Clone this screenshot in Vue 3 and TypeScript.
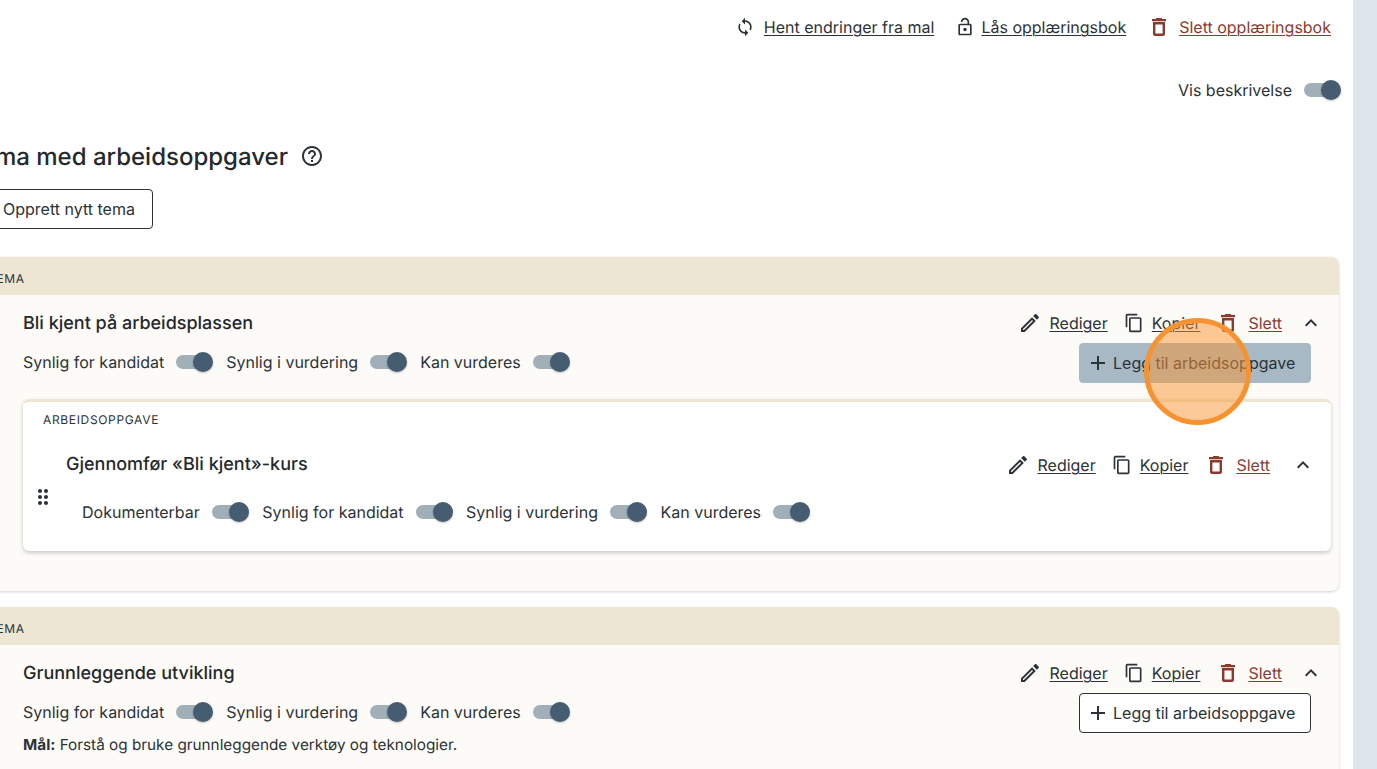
<template>
  <div class="page">
    <main class="main">
      <div class="content">
        <div class="top-actions">
          <a class="action sync">
            <svg class="icon small" viewBox="0 0 24 24"><path :d="icons.sync" /></svg>
            <span>Hent endringer fra mal</span>
          </a>
          <a class="action lock">
            <svg class="icon small" viewBox="0 0 24 24"><path :d="icons.lock" /></svg>
            <span>Lås opplæringsbok</span>
          </a>
          <a class="action danger">
            <svg class="icon" viewBox="0 0 24 24"><path :d="icons.trash" /></svg>
            <span>Slett opplæringsbok</span>
          </a>
        </div>

        <div class="show-desc">
          <span>Vis beskrivelse</span>
          <span class="switch"><span class="knob"></span></span>
        </div>

        <h2 class="heading">
          Tema med arbeidsoppgaver
          <svg class="help" viewBox="0 0 24 24"><path :d="icons.help" /></svg>
        </h2>
        <button class="btn new-theme">Opprett nytt tema</button>

        <section v-for="theme in themes" :key="theme.title" class="theme">
          <div class="theme-tag">TEMA</div>
          <div class="theme-body">
            <div class="theme-head">
              <div class="theme-info">
                <h3 class="title">{{ theme.title }}</h3>
                <div class="toggles">
                  <label v-for="t in themeToggles" :key="t" class="toggle">
                    <span>{{ t }}</span>
                    <span class="switch"><span class="knob"></span></span>
                  </label>
                </div>
                <p v-if="theme.goal" class="goal"><b>Mål:</b> {{ theme.goal }}</p>
              </div>
              <div class="theme-side">
                <div class="row-actions">
                  <a class="action edit">
                    <svg class="icon" viewBox="0 0 24 24"><path :d="icons.edit" /></svg>
                    <span>Rediger</span>
                  </a>
                  <a class="action">
                    <svg class="icon copy" viewBox="0 0 24 24"><path :d="icons.copy" /></svg>
                    <span>Kopier</span>
                  </a>
                  <a class="action danger">
                    <svg class="icon" viewBox="0 0 24 24"><path :d="icons.trash" /></svg>
                    <span>Slett</span>
                  </a>
                  <svg class="icon chevron" viewBox="0 0 24 24"><path :d="icons.less" /></svg>
                </div>
                <button class="btn add" :class="{ hovered: theme.hovered }">
                  <svg class="icon plus" viewBox="0 0 24 24"><path :d="icons.plus" /></svg>
                  Legg til arbeidsoppgave
                </button>
              </div>
            </div>

            <article v-if="theme.task" class="task">
              <div class="task-tag">ARBEIDSOPPGAVE</div>
              <div class="task-row">
                <svg class="drag" viewBox="0 0 24 24"><path :d="icons.drag" /></svg>
                <div class="task-main">
                  <div class="task-head">
                    <h3 class="title">{{ theme.task }}</h3>
                    <div class="row-actions">
                      <a class="action edit">
                        <svg class="icon" viewBox="0 0 24 24"><path :d="icons.edit" /></svg>
                        <span>Rediger</span>
                      </a>
                      <a class="action">
                        <svg class="icon copy" viewBox="0 0 24 24"><path :d="icons.copy" /></svg>
                        <span>Kopier</span>
                      </a>
                      <a class="action danger">
                        <svg class="icon" viewBox="0 0 24 24"><path :d="icons.trash" /></svg>
                        <span>Slett</span>
                      </a>
                      <svg class="icon chevron task-chevron" viewBox="0 0 24 24"><path :d="icons.less" /></svg>
                    </div>
                  </div>
                  <div class="toggles task-toggles">
                    <label v-for="t in taskToggles" :key="t" class="toggle">
                      <span>{{ t }}</span>
                      <span class="switch"><span class="knob"></span></span>
                    </label>
                  </div>
                </div>
              </div>
            </article>
          </div>
        </section>
      </div>
    </main>
    <aside class="rail"></aside>
    <div class="cursor-ring"></div>
  </div>
</template>

<script setup lang="ts">
interface Theme {
  title: string
  goal?: string
  task?: string
  hovered?: boolean
}

const themeToggles = ['Synlig for kandidat', 'Synlig i vurdering', 'Kan vurderes']
const taskToggles = ['Dokumenterbar', ...themeToggles]

const themes: Theme[] = [
  { title: 'Bli kjent på arbeidsplassen', task: 'Gjennomfør «Bli kjent»-kurs', hovered: true },
  { title: 'Grunnleggende utvikling', goal: 'Forstå og bruke grunnleggende verktøy og teknologier.' },
]

const icons = {
  sync: 'M12 4V1L8 5l4 4V6c3.31 0 6 2.69 6 6 0 1.01-.25 1.97-.7 2.8l1.46 1.46C19.54 15.03 20 13.57 20 12c0-4.42-3.58-8-8-8zm0 14c-3.31 0-6-2.69-6-6 0-1.01.25-1.97.7-2.8L5.24 7.74C4.46 8.97 4 10.43 4 12c0 4.42 3.58 8 8 8v3l4-4-4-4v3z',
  lock: 'M18 8h-1V6c0-2.76-2.24-5-5-5S7 3.24 7 6h2c0-1.66 1.34-3 3-3s3 1.34 3 3v2H6c-1.1 0-2 .9-2 2v10c0 1.1.9 2 2 2h12c1.1 0 2-.9 2-2V10c0-1.1-.9-2-2-2zm0 12H6V10h12v10zm-6-3c1.1 0 2-.9 2-2s-.9-2-2-2-2 .9-2 2 .9 2 2 2z',
  trash: 'M6 19c0 1.1.9 2 2 2h8c1.1 0 2-.9 2-2V7H6v12zM8.4 9.4h7.2v9.2H8.4V9.4zM15.5 4l-1-1h-5l-1 1H5v2.2h14V4h-3.5z',
  edit: 'M3 17.25V21h3.75L17.81 9.94l-3.75-3.75L3 17.25zM5.92 19H5v-.92l9.06-9.06.92.92L5.92 19zM20.71 7.04c.39-.39.39-1.02 0-1.41l-2.34-2.34c-.39-.39-1.02-.39-1.41 0l-1.83 1.83 3.75 3.75 1.83-1.83z',
  copy: 'M16 1H4c-1.1 0-2 .9-2 2v14h2V3h12V1zm3 4H8c-1.1 0-2 .9-2 2v14c0 1.1.9 2 2 2h11c1.1 0 2-.9 2-2V7c0-1.1-.9-2-2-2zm0 16H8V7h11v14z',
  less: 'M12 8l-6 6 1.41 1.41L12 10.83l4.59 4.58L18 14z',
  plus: 'M19 13h-6v6h-2v-6H5v-2h6V5h2v6h6v2z',
  help: 'M11 18h2v-2h-2v2zm1-16C6.48 2 2 6.48 2 12s4.48 10 10 10 10-4.48 10-10S17.52 2 12 2zm0 18c-4.41 0-8-3.59-8-8s3.59-8 8-8 8 3.59 8 8-3.59 8-8 8zm0-14c-2.21 0-4 1.79-4 4h2c0-1.1.9-2 2-2s2 .9 2 2c0 2-3 1.75-3 5h2c0-2.25 3-2.5 3-5 0-2.21-1.79-4-4-4z',
  drag: 'M11 18c0 1.1-.9 2-2 2s-2-.9-2-2 .9-2 2-2 2 .9 2 2zm-2-8c-1.1 0-2 .9-2 2s.9 2 2 2 2-.9 2-2-.9-2-2-2zm0-6c-1.1 0-2 .9-2 2s.9 2 2 2 2-.9 2-2-.9-2-2-2zm6 4c1.1 0 2-.9 2-2s-.9-2-2-2-2 .9-2 2 .9 2 2 2zm0 2c-1.1 0-2 .9-2 2s.9 2 2 2 2-.9 2-2-.9-2-2-2zm0 6c-1.1 0-2 .9-2 2s.9 2 2 2 2-.9 2-2-.9-2-2-2z',
}
</script>

<style>
html,
body {
  margin: 0;
  overflow: hidden;
  background: #fff;
}
</style>

<style scoped>
.page {
  position: relative;
  display: flex;
  height: 769px;
  overflow: hidden;
  font-family: Inter, "Liberation Sans", sans-serif;
  font-size: 16px;
  color: #2b3238;
  text-rendering: geometricPrecision;
}

.main {
  flex: 1;
  min-width: 0;
  overflow: hidden;
}

.rail {
  width: 24px;
  background: #dde6ed;
}

.content {
  margin-left: -14px;
  width: 1353px;
  padding-top: 15px;
}

.top-actions {
  display: flex;
  justify-content: flex-end;
  gap: 21px;
  padding-right: 8px;
}

.action {
  display: inline-flex;
  align-items: center;
  gap: 8px;
  color: #2b3238;
}

.action.sync {
  gap: 9px;
}

.action.lock {
  gap: 6px;
}

.action.edit {
  gap: 7px;
}

.action span {
  text-decoration: underline;
  text-underline-offset: 2px;
  text-decoration-thickness: 1px;
}

.action.danger {
  color: #8b3a2e;
}

.icon {
  width: 24px;
  height: 24px;
  fill: currentColor;
  flex: none;
}

.icon.small,
.icon.copy {
  width: 20px;
  height: 20px;
}

.show-desc {
  display: flex;
  justify-content: flex-end;
  align-items: center;
  gap: 12px;
  margin: 39px -2px 0 0;
  height: 24px;
}

.switch {
  position: relative;
  display: inline-block;
  width: 37px;
  height: 20px;
  flex: none;
}

.switch::before {
  content: "";
  position: absolute;
  left: 0;
  top: 3px;
  width: 34px;
  height: 14px;
  border-radius: 7px;
  background: #a1afb9;
}

.knob {
  position: absolute;
  right: 0;
  top: 0;
  width: 20px;
  height: 20px;
  border-radius: 50%;
  background: #465c70;
  box-shadow: 0 1px 2px rgba(0, 0, 0, 0.25);
}

.heading {
  display: flex;
  align-items: center;
  gap: 12px;
  margin: 37px 0 0 -19px;
  height: 34px;
  font-size: 24px;
  font-weight: 500;
  color: #25292d;
}

.help {
  width: 24px;
  height: 24px;
  fill: #2b3238;
}

.btn {
  display: inline-flex;
  align-items: center;
  height: 40px;
  box-sizing: border-box;
  border: 1px solid #2b3238;
  border-radius: 4px;
  background: #fff;
  font: inherit;
  color: #2b3238;
}

.new-theme {
  margin-top: 16px;
  padding: 0 17px 0 16px;
}

.theme {
  margin-top: 28px;
  border-radius: 8px;
  background: #fdfbf7;
  box-shadow: 0 1px 3px rgba(0, 0, 0, 0.18);
}

.theme + .theme {
  margin-top: 16px;
}

.theme-tag {
  height: 38px;
  box-sizing: border-box;
  padding: 4px 0 0 2px;
  display: flex;
  align-items: center;
  border-radius: 8px 8px 0 0;
  background: #ede6d2;
  font-size: 12px;
  letter-spacing: 0.66px;
}

.theme-body {
  padding: 0 8px 40px 37px;
}

.theme-head {
  display: flex;
  justify-content: space-between;
  padding-top: 16px;
}

.title {
  margin: 0;
  font-size: 18px;
  font-weight: 500;
  line-height: 26px;
  color: #25292d;
}

.toggles {
  display: flex;
  gap: 13px;
  margin-top: 13px;
}

.toggle {
  display: inline-flex;
  align-items: center;
  gap: 12px;
  height: 24px;
}

.goal {
  margin: 9px 0 0;
  font-size: 15.3px;
  line-height: 24px;
}

.theme-side {
  display: flex;
  flex-direction: column;
  align-items: flex-end;
  padding-right: 20px;
}

.row-actions {
  display: flex;
  align-items: center;
  gap: 16px;
}

.theme-side .row-actions {
  margin-right: -12px;
}

.chevron {
  margin-left: 1px;
}

.task-chevron {
  margin-left: 5px;
}

.add {
  margin-top: 8px;
  width: 232px;
  padding: 0 6px;
  gap: 3px;
  white-space: nowrap;
  background: #fff;
}

.add.hovered {
  border-color: #a7b9c5;
  background: #a7b9c5;
}

.task {
  margin-top: 16px;
  border-top: 3px solid #ede6d2;
  border-radius: 6px;
  background: #fff;
  padding-bottom: 27px;
  box-shadow: 0 2px 4px rgba(0, 0, 0, 0.2);
}

.task-tag {
  padding: 9px 0 0 20px;
  font-size: 12px;
  line-height: 18px;
  letter-spacing: 0.66px;
}

.task-row {
  display: flex;
  align-items: flex-start;
}

.drag {
  width: 24px;
  height: 24px;
  margin: 56px 0 0 8px;
  fill: #2b3238;
  flex: none;
}

.task-main {
  flex: 1;
  min-width: 0;
  padding: 0 16px 0 11px;
}

.task-head {
  display: flex;
  justify-content: space-between;
  align-items: center;
  margin-top: 23px;
}

.task-toggles {
  gap: 13.5px;
  margin-top: 22px;
  padding-left: 16px;
}

.cursor-ring {
  position: absolute;
  left: 1144px;
  top: 318px;
  width: 107px;
  height: 107px;
  box-sizing: border-box;
  border: 5px solid #f79232;
  border-radius: 50%;
  background: rgba(250, 150, 50, 0.5);
}
</style>
